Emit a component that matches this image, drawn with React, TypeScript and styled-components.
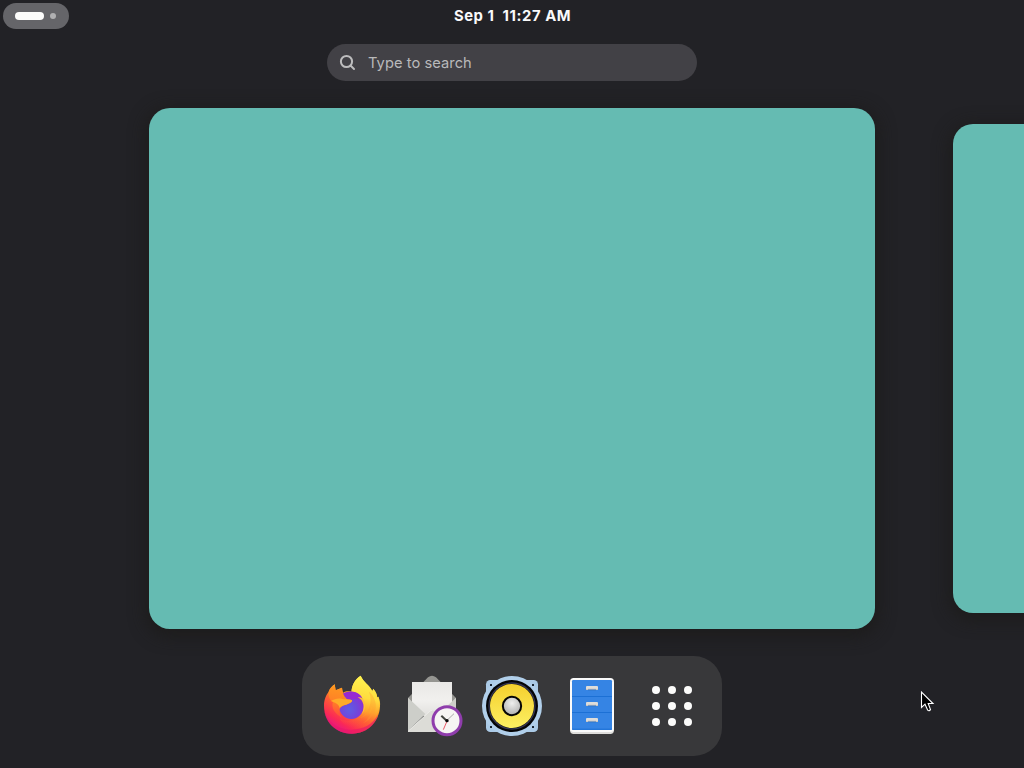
import React from "react";
import styled, { createGlobalStyle } from "styled-components";

const GlobalStyle = createGlobalStyle`
  * { box-sizing: border-box; }
  body {
    margin: 0;
    overflow: hidden;
    background: #222226;
    font-family: Inter, "Liberation Sans", sans-serif;
  }
`;

const Desktop = styled.main`
  position: relative;
  display: flex;
  flex-direction: column;
  align-items: center;
  width: 1024px;
  height: 768px;
  overflow: hidden;
  background: #222226;
`;

const TopBar = styled.header`
  display: grid;
  grid-template-columns: 1fr auto 1fr;
  align-items: center;
  width: 100%;
  height: 32px;
  padding: 0 3px;
  flex: none;
`;

const Activities = styled.button`
  display: flex;
  align-items: center;
  justify-self: start;
  gap: 6px;
  width: 66px;
  height: 26px;
  padding: 0 12px;
  border: 0;
  border-radius: 13px;
  background: #656569;
`;

const WorkspaceDot = styled.span<{ $active?: boolean }>`
  width: ${(p) => (p.$active ? 29 : 6)}px;
  height: ${(p) => (p.$active ? 8 : 6)}px;
  flex: none;
  border-radius: 4px;
  background: ${(p) => (p.$active ? "#fcfcfb" : "#b0b0b2")};
`;

const Clock = styled.time`
  padding-left: 1px;
  color: #fafafb;
  font-size: 14.8px;
  font-weight: 700;
  line-height: 32px;
  letter-spacing: 0.57px;
  white-space: pre;
`;

const SearchEntry = styled.div`
  display: flex;
  align-items: center;
  gap: 12px;
  width: 370px;
  height: 37px;
  margin-top: 12px;
  padding: 0 12px;
  flex: none;
  border-radius: 18.5px;
  background: #424146;
  color: #b9b9bb;
  font-size: 14.67px;
  letter-spacing: 0.06px;
`;

const SearchGlyph = styled.svg`
  display: block;
  width: 17px;
  height: 17px;
`;

const Workspaces = styled.section`
  display: flex;
  align-items: center;
  align-self: stretch;
  gap: 78px;
  height: 521px;
  margin-top: 27px;
  padding-left: 149px;
  flex: none;
`;

const Workspace = styled.div<{ $current?: boolean }>`
  flex: none;
  width: ${(p) => (p.$current ? 726 : 682)}px;
  height: ${(p) => (p.$current ? 521 : 489)}px;
  border-radius: ${(p) => (p.$current ? 21 : 20)}px;
  background: #65bbb2;
  box-shadow: 0 4px 16px 4px rgba(28, 27, 26, 0.75);
`;

const Dock = styled.nav`
  display: flex;
  height: 100px;
  margin-top: 27px;
  padding: 10px;
  flex: none;
  border-radius: 28px;
  background: #38383a;
`;

const Launcher = styled.svg`
  display: block;
  width: 80px;
  height: 80px;
`;

const AppGrid = styled.div`
  display: grid;
  grid-template-columns: repeat(3, 8px);
  grid-auto-rows: 8px;
  gap: 8px;
  place-content: center;
  width: 80px;
  height: 80px;
`;

const GridDot = styled.span`
  border-radius: 50%;
  background: #fcfcfb;
`;

const Pointer = styled.svg`
  position: absolute;
  left: 920px;
  top: 690px;
  width: 16px;
  height: 24px;
`;

function FirefoxIcon() {
  return (
    <Launcher viewBox="0 0 240 240">
      <defs>
        <linearGradient id="fxBody" x1="0.8" y1="0.05" x2="0.25" y2="0.95">
          <stop offset="0" stopColor="#fff44f" />
          <stop offset="0.25" stopColor="#ffc832" />
          <stop offset="0.45" stopColor="#ff9322" />
          <stop offset="0.65" stopColor="#ff5a36" />
          <stop offset="0.85" stopColor="#fb2a55" />
          <stop offset="1" stopColor="#e31587" />
        </linearGradient>
        <linearGradient id="fxFlame" x1="0.55" y1="0" x2="0.4" y2="1">
          <stop offset="0" stopColor="#fff450" />
          <stop offset="0.4" stopColor="#ffdc3e" />
          <stop offset="0.65" stopColor="#ffa52d" />
          <stop offset="0.85" stopColor="#ff6038" stopOpacity="0.4" />
          <stop offset="1" stopColor="#ff4b42" stopOpacity="0" />
        </linearGradient>
        <linearGradient id="fxHead" x1="0.5" y1="0" x2="0.4" y2="1">
          <stop offset="0" stopColor="#ff9a1f" />
          <stop offset="0.5" stopColor="#ff8226" />
          <stop offset="1" stopColor="#ff493d" />
        </linearGradient>
        <radialGradient id="fxGlobe" cx="0.42" cy="0.65" r="0.65">
          <stop offset="0" stopColor="#5f5de4" />
          <stop offset="0.5" stopColor="#7047dc" />
          <stop offset="1" stopColor="#952bd0" />
        </radialGradient>
      </defs>
      <path d="M146 29C154 48 172 56 181 74L184 68C193 78 195 87 196 94L199 92C204 102 205 111 204 121C202 168 166 203 120 203C72 203 36 167 36 119C36 99 43 86 50 77C53 68 60 61 68 55L71 73L90 65L93 80C101 75 111 75 119 77C119 56 131 37 146 29Z" fill="url(#fxBody)" />
      <path d="M118 78C119 56 131 37 146 29C154 49 174 58 181 78L184 69C193 79 195 89 195 96L199 92C207 127 196 163 163 181C134 193 98 186 84 159C116 174 150 153 155 125C156 101 139 83 118 78Z" fill="url(#fxFlame)" />
      <path d="M37 134C46 168 76 189 115 191C154 192 184 174 199 145C190 181 157 203 120 203C76 203 42 174 37 134Z" fill="#ea1968" opacity=".65" />
      <path d="M171 77C184 109 170 144 142 157C160 151 174 143 179 122C179 146 167 162 151 173C183 158 198 132 189 104C185 91 178 82 171 77Z" fill="#ff9a30" opacity=".35" />
      <ellipse cx="118" cy="118" rx="38" ry="41" fill="url(#fxGlobe)" />
      <path d="M91 84C104 74 132 73 147 90L150 96L110 101Z" fill="#9729d2" />
      <path d="M137 94C147 92 155 98 158 108C162 121 158 135 149 145C154 136 156 125 154 115C151 104 146 98 137 94Z" fill="#ffc13a" />
      <path d="M50 77C54 67 60 61 68 55L71 73L90 65C89 76 94 89 105 100C112 102 119 101 120 103C122 108 112 113 103 116C94 117 86 122 83 129C81 138 83 147 90 155C67 144 57 123 63 109C54 102 48 91 50 77Z" fill="url(#fxHead)" />
      <path d="M57 105C67 99 79 96 91 99C102 101 118 99 120 103C122 108 110 114 102 116C93 118 87 120 83 126C80 113 68 110 57 105Z" fill="#ffab28" />
    </Launcher>
  );
}

function MailIcon() {
  return (
    <Launcher viewBox="0 0 240 240">
      <defs>
        <linearGradient id="letter" x1="0" y1="0" x2="0" y2="1">
          <stop offset="0" stopColor="#e9e8e6" />
          <stop offset="0.5" stopColor="#f1f0ee" />
          <stop offset="1" stopColor="#deddda" />
        </linearGradient>
      </defs>
      <path d="M48 96L108 34Q120 25 132 34L192 96V120H48Z" fill="#959591" />
      <path d="M60 48H180V135L120 160L60 135Z" fill="url(#letter)" />
      <path d="M48 95L100 144L48 196Z" fill="#cdcec9" />
      <path d="M192 95L140 144L192 196Z" fill="#cdcec9" />
      <path d="M48 198V194L111 138Q120 129 129 138L192 194V198Z" fill="#dcdcd7" />
      <path d="M49 195L111 138Q116 133 120 133" fill="none" stroke="#eeeeeb" strokeWidth="2.5" />
      <circle cx="165" cy="164" r="42" fill="#f6f5f3" stroke="#8f3dac" strokeWidth="9" />
      <path d="M164 164L148 149" stroke="#42443f" strokeWidth="6" />
      <path d="M166 162L186 143" stroke="#aaa" strokeWidth="3" />
      <path d="M166 163L154 191" stroke="#eb5866" strokeWidth="3" />
      <circle cx="165" cy="164" r="5" fill="#080808" />
    </Launcher>
  );
}

function SpeakerIcon() {
  const screws = [[57, 57], [183, 57], [57, 183], [183, 183]];
  return (
    <Launcher viewBox="0 0 240 240">
      <defs>
        <linearGradient id="cone" x1="0" y1="0" x2="0" y2="1">
          <stop offset="0" stopColor="#f5d02e" />
          <stop offset="1" stopColor="#fcef62" />
        </linearGradient>
        <radialGradient id="cap" cx=".5" cy=".35" r=".6">
          <stop offset="0" stopColor="#f0f0ef" />
          <stop offset="1" stopColor="#b4b4b3" />
        </radialGradient>
      </defs>
      <rect x="42" y="42" width="156" height="156" rx="13" fill="#abcae6" />
      <circle cx="120" cy="120" r="90" fill="#b1cfea" />
      {screws.map(([x, y]) => (
        <rect key={`${x}-${y}`} x={x - 3} y={y - 3} width="6" height="6" rx="1" fill="#17212d" />
      ))}
      <circle cx="120" cy="120" r="78" fill="#050507" />
      <circle cx="120" cy="120" r="69" fill="none" stroke="#343651" strokeWidth="4" />
      <circle cx="120" cy="120" r="66" fill="url(#cone)" />
      <circle cx="120" cy="120" r="27.5" fill="url(#cap)" stroke="#050505" strokeWidth="6" />
    </Launcher>
  );
}

function FilesIcon() {
  return (
    <Launcher viewBox="0 0 240 240">
      <rect x="54" y="48" width="132" height="156" rx="11" fill="#dedddb" />
      <rect x="54" y="36" width="132" height="162" rx="11" fill="#fafafa" />
      <rect x="60" y="42" width="120" height="150" rx="4" fill="#3584e4" />
      {[90, 138, 188].map((y) => (
        <rect key={y} x="60" y={y} width="120" height="3" fill="#1c70d5" />
      ))}
      {[60, 108, 156].map((y) => (
        <g key={y}>
          <rect x="108" y={y + 9} width="24" height="4" fill="#2d6fbd" />
          <rect x="102" y={y + 3} width="6" height="9" fill="#c5c1bc" />
          <rect x="132" y={y + 3} width="6" height="9" fill="#c5c1bc" />
          <rect x="102" y={y} width="36" height="10" rx="3" fill="#deddda" />
          <rect x="108" y={y + 8} width="24" height="2" fill="#c5c1bc" />
        </g>
      ))}
    </Launcher>
  );
}

export default function App() {
  return (
    <>
      <GlobalStyle />
      <Desktop>
        <TopBar>
          <Activities aria-label="Activities">
            <WorkspaceDot $active />
            <WorkspaceDot />
          </Activities>
          <Clock>{"Sep 1  11:27 AM"}</Clock>
        </TopBar>
        <SearchEntry>
          <SearchGlyph viewBox="0 0 17 17" fill="none" stroke="#bdbdbe" strokeWidth="2">
            <circle cx="7.5" cy="7.5" r="5.6" />
            <path d="M11.5 11.5L15 15" strokeLinecap="round" />
          </SearchGlyph>
          <span>Type to search</span>
        </SearchEntry>
        <Workspaces>
          <Workspace $current />
          <Workspace />
        </Workspaces>
        <Dock>
          <FirefoxIcon />
          <MailIcon />
          <SpeakerIcon />
          <FilesIcon />
          <AppGrid>
            {Array.from({ length: 9 }, (_, i) => (
              <GridDot key={i} />
            ))}
          </AppGrid>
        </Dock>
        <Pointer viewBox="0 0 16 24">
          <path d="M1.5 2V17.5L5 14.2L7.7 20.2Q9 21.5 10.5 19.6L8.2 13.5H13Z" fill="#000" stroke="#fff" strokeWidth="1.1" />
        </Pointer>
      </Desktop>
    </>
  );
}
